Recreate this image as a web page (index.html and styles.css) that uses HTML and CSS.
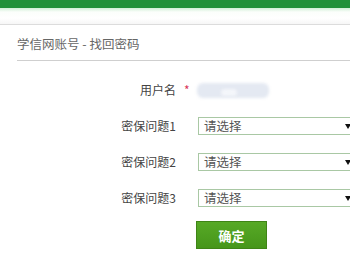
FILE: index.html
```html
<!DOCTYPE html>
<html lang="zh-CN">
<head>
  <meta charset="UTF-8">
  <title>学信网账号 - 找回密码</title>
  <link rel="stylesheet" href="styles.css">
</head>
<body>
  <div class="topbar"></div>
  <div class="subbar"></div>
  <div class="panel">
    <div class="title">学信网账号 - 找回密码</div>
    <form class="form">
      <label class="label">用户名</label>
      <span class="star">*</span>
      <div class="user"><span class="blur"></span><span class="blur small"></span></div>

      <label class="label">密保问题1</label>
      <span class="star"></span>
      <div class="select">请选择<span class="arrow"></span></div>

      <label class="label">密保问题2</label>
      <span class="star"></span>
      <div class="select">请选择<span class="arrow"></span></div>

      <label class="label">密保问题3</label>
      <span class="star"></span>
      <div class="select">请选择<span class="arrow"></span></div>

      <span></span>
      <span></span>
      <div class="actions"><button type="button" class="btn">确定</button></div>
    </form>
  </div>
</body>
</html>
```

FILE: styles.css
```css
body {
  margin: 0;
  background: #fff;
  font-family: "Noto Sans CJK SC", "Noto Sans", sans-serif;
  font-size: 12px;
  color: #555;
  overflow: hidden;
}
.topbar {
  height: 8px;
  background: #22913a;
}
.subbar {
  height: 16px;
  background: linear-gradient(#d2efd7, #fbfefb 4px, #fff 10px, #f6f6f6);
  border-bottom: 1px solid #dcdcdc;
}
.panel {
  padding-left: 17px;
}
.title {
  height: 35px;
  line-height: 38px;
  font-size: 12.5px;
  color: #666;
  border-bottom: 1px solid #cfcfcf;
}
.form {
  display: grid;
  grid-template-columns: 159px 22px 160px;
  grid-template-rows: repeat(4, 18px) auto;
  row-gap: 18px;
  padding-top: 20px;
  margin: 0;
}
.label {
  text-align: right;
  line-height: 18px;
  color: #444;
  font-size: 12px;
}
.star {
  color: #d9375a;
  line-height: 18px;
  padding-left: 8px;
}
.user {
  position: relative;
  display: flex;
  align-items: center;
  margin-left: -1px;
}
.blur {
  width: 72px;
  height: 15px;
  background: #e4e9f2;
  border-radius: 6px;
  filter: blur(1.5px);
}
.blur.small {
  position: absolute;
  left: 24px;
  top: 8px;
  width: 16px;
  height: 7px;
  background: #f4f6fa;
}
.select {
  position: relative;
  box-sizing: border-box;
  height: 18px;
  border: 1px solid #a9c8a4;
  padding-left: 5px;
  line-height: 16px;
  color: #555;
  font-size: 12.5px;
}
.arrow {
  position: absolute;
  left: 146px;
  top: 6px;
  border-left: 3px solid transparent;
  border-right: 3px solid transparent;
  border-top: 5px solid #111;
}
.actions {
  margin-top: -4px;
  margin-left: -2px;
}
.btn {
  display: block;
  width: 71px;
  height: 28px;
  border: 1px solid #3f8416;
  background: linear-gradient(#57a926, #46961a);
  color: #fff;
  font-family: inherit;
  font-size: 13px;
  font-weight: bold;
  padding: 0;
}
```
